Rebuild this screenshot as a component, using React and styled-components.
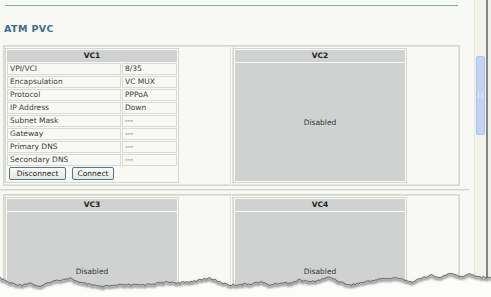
import React from 'react'
import styled, { createGlobalStyle } from 'styled-components'

const GlobalStyle = createGlobalStyle`
  html, body {
    margin: 0;
    padding: 0;
    background: #fcfcfb;
  }
  body {
    font-family: 'DejaVu Sans', Verdana, sans-serif;
    color: #333;
  }
`;

const Frame = styled.div`
  position: relative;
  width: 491px;
  height: 297px;
  background: #efefeb;
  overflow: hidden;
`;

const Window = styled.div`
  display: flex;
  width: 486px;
  height: 297px;
  background: #f8f8f5;
  border-right: 2px solid #858585;
`;

const Content = styled.div`
  width: 474px;
  padding-top: 5px;
  overflow: hidden;
`;

const TopRule = styled.div`
  margin-left: 5px;
  width: 453px;
  height: 1px;
  background: #7fa8b0;
`;

const Title = styled.h2`
  margin: 17px 0 11px 4px;
  font: bold 9.5px/11px 'DejaVu Sans', Verdana, sans-serif;
  letter-spacing: 0.4px;
  color: #3c6e8c;
`;

const OuterRow = styled.div`
  display: flex;
  gap: 1px;
  margin-left: 3px;
  width: 457px;
  height: 141px;
  box-sizing: border-box;
  border: 1px solid #d6d6d1;
`;

const OuterCell = styled.div`
  flex: 1;
  display: flex;
  align-items: stretch;
  border: 1px solid #e2e2dd;
  padding: 1px 0;
`;

const Panel = styled.div`
  width: 174px;
  box-sizing: border-box;
  border: 1px solid #d6d6d1;
  padding: 1px;
  display: flex;
  flex-direction: column;
  gap: 1px;
`;

const PanelHeader = styled.div`
  height: 12px;
  background: #cfd2d1;
  font: bold 7.5px/12px 'DejaVu Sans', Verdana, sans-serif;
  text-align: center;
  color: #222;
`;

const InfoGrid = styled.div`
  display: grid;
  grid-template-columns: 114px 1fr;
  gap: 1px;
`;

const Cell = styled.div`
  height: 12px;
  box-sizing: border-box;
  border: 1px solid #dadad5;
  padding-left: 2px;
  font-size: 7.5px;
  line-height: 10px;
  white-space: nowrap;
  color: #3a3a3a;
`;

const ButtonRow = styled.div`
  display: flex;
  gap: 6px;
  padding: 0 0 0 2px;
`;

const Button = styled.button`
  width: ${p => p.$w}px;
  height: 13px;
  padding: 0;
  border: 1px solid #56768f;
  border-radius: 2px;
  background: linear-gradient(#fbfbf8, #e7e7e1);
  font: 7.5px/11px 'DejaVu Sans', Verdana, sans-serif;
  color: #222;
`;

const DisabledBody = styled.div`
  flex: 1;
  background: #cfd2d1;
  display: flex;
  align-items: center;
  justify-content: center;
  font-size: 7.5px;
  color: #333;
`;

const Divider = styled.div`
  width: 469px;
  margin: 3px 0 3px;
  border-top: 1px solid #d2d2cd;
  border-bottom: 1px solid #e9e9e5;
`;

const Scrollbar = styled.div`
  width: 11px;
  background: #f3f3ec;
  border-left: 1px solid #e6e6d9;
`;

const Thumb = styled.div`
  margin: 56px 0 0 1px;
  width: 9px;
  height: 79px;
  box-sizing: border-box;
  background: #c3d3f4;
  border: 1px solid #aec2ec;
  border-radius: 2px;
  display: flex;
  align-items: center;
  justify-content: center;
`;

const Grip = styled.div`
  width: 3px;
  height: 5px;
  border-left: 1px solid #e2eafb;
  border-right: 1px solid #e2eafb;
`;

const Torn = styled.svg`
  position: absolute;
  left: 0;
  top: 0;
  pointer-events: none;
`;

const rows = [
  ['VPI/VCI', '8/35'],
  ['Encapsulation', 'VC MUX'],
  ['Protocol', 'PPPoA'],
  ['IP Address', 'Down'],
  ['Subnet Mask', '---'],
  ['Gateway', '---'],
  ['Primary DNS', '---'],
  ['Secondary DNS', '---'],
];

const anchors = [
  [0, 278], [10, 283], [20, 285], [30, 283], [40, 287], [50, 282], [60, 280],
  [70, 278], [80, 283], [90, 284], [100, 287], [120, 285], [140, 285],
  [160, 283], [170, 282], [180, 283], [200, 280], [210, 278], [220, 282],
  [230, 285], [250, 284], [260, 282], [270, 285], [280, 283], [290, 283],
  [300, 280], [310, 282], [320, 280], [330, 277], [340, 282], [350, 285],
  [360, 283], [380, 279], [400, 278], [410, 282], [420, 279], [430, 275],
  [440, 278], [450, 273], [460, 277], [470, 274], [480, 277], [491, 278],
];

function rnd(i) {
  const s = Math.sin(i * 12.9898) * 43758.5453;
  return s - Math.floor(s);
}

function edgePoints() {
  const pts = [];
  let k = 0;
  for (let a = 0; a < anchors.length - 1; a++) {
    const [x0, y0] = anchors[a];
    const [x1, y1] = anchors[a + 1];
    const steps = Math.max(1, Math.round((x1 - x0) / 1.6));
    for (let s = 0; s < steps; s++) {
      const t = s / steps;
      const x = x0 + (x1 - x0) * t;
      const y = y0 + (y1 - y0) * t + (rnd(k++) - 0.5) * 1.8;
      pts.push([x.toFixed(1), y.toFixed(1)]);
    }
  }
  pts.push(anchors[anchors.length - 1]);
  return pts;
}

const EDGE = edgePoints();
const edgeLine = 'M' + EDGE.map(p => p.join(' ')).join(' L');
const edgeFill = edgeLine + ' L491 297 L0 297 Z';

function VCPanel({ name, children }) {
  return (
    <Panel>
      <PanelHeader>{name}</PanelHeader>
      {children}
    </Panel>
  );
}

function DisabledPanel({ name }) {
  return (
    <VCPanel name={name}>
      <DisabledBody>Disabled</DisabledBody>
    </VCPanel>
  );
}

export default function App() {
  return (
    <Frame>
      <GlobalStyle />
      <Window>
        <Content>
          <TopRule />
          <Title>ATM PVC</Title>
          <OuterRow>
            <OuterCell>
              <VCPanel name="VC1">
                <InfoGrid>
                  {rows.map(([k, v]) => (
                    <React.Fragment key={k}>
                      <Cell>{k}</Cell>
                      <Cell>{v}</Cell>
                    </React.Fragment>
                  ))}
                </InfoGrid>
                <ButtonRow>
                  <Button $w={57}>Disconnect</Button>
                  <Button $w={42}>Connect</Button>
                </ButtonRow>
              </VCPanel>
            </OuterCell>
            <OuterCell>
              <DisabledPanel name="VC2" />
            </OuterCell>
          </OuterRow>
          <Divider />
          <OuterRow>
            <OuterCell>
              <DisabledPanel name="VC3" />
            </OuterCell>
            <OuterCell>
              <DisabledPanel name="VC4" />
            </OuterCell>
          </OuterRow>
        </Content>
        <Scrollbar>
          <Thumb>
            <Grip />
          </Thumb>
        </Scrollbar>
      </Window>
      <Torn width="491" height="297" viewBox="0 0 491 297">
        <defs>
          <filter id="tearShadow" x="-5%" y="-50%" width="110%" height="200%">
            <feGaussianBlur stdDeviation="1.3" />
          </filter>
        </defs>
        <path d={edgeFill} fill="#fcfcfb" />
        <path d={edgeLine} transform="translate(0 1.8)" fill="none" stroke="#6a6a6a" strokeWidth="2.2" filter="url(#tearShadow)" opacity="0.8" />
        <path d={edgeLine} fill="none" stroke="#5a5a5a" strokeWidth="0.9" />
      </Torn>
    </Frame>
  );
}
